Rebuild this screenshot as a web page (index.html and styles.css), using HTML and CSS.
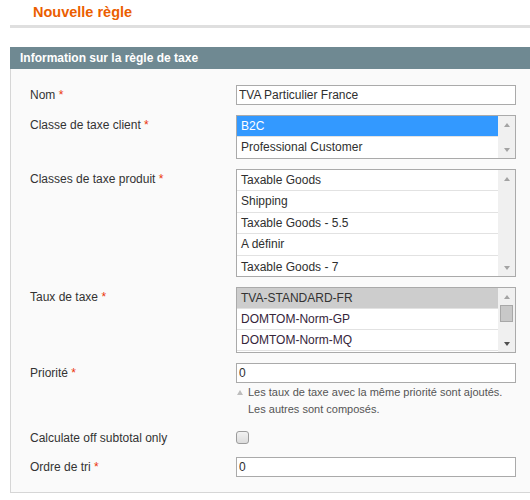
FILE: index.html
```html
<!DOCTYPE html>
<html lang="fr">
<head>
<meta charset="utf-8">
<title>Nouvelle règle</title>
<link rel="stylesheet" href="styles.css">
</head>
<body>
<div class="page">
  <div class="content-header">
    <h3 class="title">Nouvelle règle</h3>
  </div>
  <div class="entry">
    <div class="entry-head"><h4>Information sur la règle de taxe</h4></div>
    <div class="fieldset">
      <div class="row">
        <label class="lbl">Nom <span class="req">*</span></label>
        <div class="field"><input class="text" type="text" value="TVA Particulier France"></div>
      </div>
      <div class="row">
        <label class="lbl">Classe de taxe client <span class="req">*</span></label>
        <div class="field">
          <div class="msel h-client">
            <div class="opts">
              <div class="opt sel">B2C</div>
              <div class="opt last">Professional Customer</div>
            </div>
            <div class="sb">
              <div class="sb-btn"><span class="arrow-up"></span></div>
              <div class="sb-track"></div>
              <div class="sb-btn"><span class="arrow-down"></span></div>
            </div>
          </div>
        </div>
      </div>
      <div class="row">
        <label class="lbl">Classes de taxe produit <span class="req">*</span></label>
        <div class="field">
          <div class="msel h-produit">
            <div class="opts">
              <div class="opt">Taxable Goods</div>
              <div class="opt">Shipping</div>
              <div class="opt">Taxable Goods - 5.5</div>
              <div class="opt">A définir</div>
              <div class="opt last">Taxable Goods - 7</div>
            </div>
            <div class="sb">
              <div class="sb-btn"><span class="arrow-up"></span></div>
              <div class="sb-track"></div>
              <div class="sb-btn"><span class="arrow-down"></span></div>
            </div>
          </div>
        </div>
      </div>
      <div class="row">
        <label class="lbl">Taux de taxe <span class="req">*</span></label>
        <div class="field">
          <div class="msel h-taux">
            <div class="opts">
              <div class="opt sel-gray">TVA-STANDARD-FR</div>
              <div class="opt dark">DOMTOM-Norm-GP</div>
              <div class="opt dark">DOMTOM-Norm-MQ</div>
            </div>
            <div class="sb">
              <div class="sb-btn"><span class="arrow-up"></span></div>
              <div class="sb-track"><div class="thumb"></div></div>
              <div class="sb-btn"><span class="arrow-down active"></span></div>
            </div>
          </div>
        </div>
      </div>
      <div class="row">
        <label class="lbl">Priorité <span class="req">*</span></label>
        <div class="field">
          <input class="text" type="text" value="0">
          <div class="note">
            <span class="note-icon"><span class="note-tri"></span></span>
            <span class="note-text">Les taux de taxe avec la même priorité sont ajoutés. Les autres sont composés.</span>
          </div>
        </div>
      </div>
      <div class="row row-check">
        <label class="lbl">Calculate off subtotal only</label>
        <div class="field"><input class="check" type="checkbox"></div>
      </div>
      <div class="row">
        <label class="lbl">Ordre de tri <span class="req">*</span></label>
        <div class="field"><input class="text" type="text" value="0"></div>
      </div>
    </div>
  </div>
</div>
</body>
</html>
```
FILE: styles.css
```css
html, body {
  margin: 0;
  padding: 0;
}
body {
  overflow: hidden;
  background: #fff;
  font-family: "Liberation Sans", Arial, sans-serif;
  font-size: 12px;
  color: #2f2f2f;
}
.page {
  margin-left: 10px;
  margin-right: -20px;
}
.content-header {
  padding: 3px 0 4px 23px;
  border-bottom: 3px solid #dfdfdf;
  margin-bottom: 19px;
}
.title {
  margin: 0;
  font-size: 14.5px;
  line-height: 18px;
  font-weight: bold;
  color: #eb5e00;
}
.entry-head {
  height: 22px;
  background: #6f8992;
  padding-left: 10px;
}
.entry-head h4 {
  margin: 0;
  font-size: 12px;
  line-height: 22px;
  font-weight: bold;
  color: #fff;
}
.fieldset {
  background: #fafafa;
  border: 1px solid #d6d6d6;
  border-top: 0;
  padding: 16px 0 15px 19px;
  display: flex;
  flex-direction: column;
  gap: 10px;
}
.row {
  display: grid;
  grid-template-columns: 206px 280px;
}
.lbl {
  font-size: 12px;
  line-height: 18px;
  padding-top: 1px;
  color: #333;
}
.req {
  color: #eb340a;
}
.text {
  display: block;
  box-sizing: border-box;
  width: 280px;
  height: 20px;
  margin: 0;
  border: 1px solid #aaa;
  padding: 0 2px;
  font-family: "Liberation Sans", Arial, sans-serif;
  font-size: 12px;
  line-height: 18px;
  color: #2f2f2f;
  background: #fff;
  outline: none;
}
.msel {
  box-sizing: border-box;
  width: 280px;
  border: 1px solid #aaa;
  background: #fff;
  display: flex;
  overflow: hidden;
}
.h-client { height: 44px; }
.h-produit { height: 108px; }
.h-taux { height: 66px; }
.opts {
  flex: 1;
  min-width: 0;
}
.opt {
  height: 20px;
  line-height: 20px;
  padding-left: 4px;
  border-bottom: 1px solid #e2e2e2;
  white-space: nowrap;
  font-size: 12px;
  color: #2f2f2f;
}
.h-produit .opt {
  height: 20.4px;
  line-height: 20.4px;
}
.h-produit .opt.last {
  height: 21px;
  line-height: 22px;
}
.opt.last {
  border-bottom: 0;
}
.opt.sel {
  background: #3399ff;
  color: #fff;
}
.opt.sel-gray {
  background: #cdcdcd;
  color: #333;
}
.opt.dark {
  color: #35253a;
}
.sb {
  width: 17px;
  flex: none;
  background: #f0f0f0;
  display: flex;
  flex-direction: column;
}
.sb-btn {
  height: 17px;
  flex: none;
  display: flex;
  align-items: center;
  justify-content: center;
}
.sb-track {
  flex: 1;
  padding: 0 2px;
}
.thumb {
  box-sizing: border-box;
  height: 17px;
  background: #c8c8c8;
  border: 1px solid #a8a8a8;
}
.arrow-up, .arrow-down {
  width: 0;
  height: 0;
  border-left: 3.5px solid transparent;
  border-right: 3.5px solid transparent;
}
.arrow-up {
  border-bottom: 4px solid #a3a3a3;
}
.arrow-down {
  border-top: 4px solid #a3a3a3;
}
.arrow-down.active {
  border-top-color: #505050;
}
.note {
  display: flex;
  margin-top: 1px;
  font-size: 11px;
  line-height: 17px;
  color: #555;
}
.note-icon {
  flex: 0 0 12px;
  height: 17px;
  display: flex;
  align-items: center;
}
.note-tri {
  margin-left: 1px;
  width: 0;
  height: 0;
  border-left: 3px solid transparent;
  border-right: 3px solid transparent;
  border-bottom: 5px solid #bdbdbd;
}
.note-text {
  flex: 1;
}
.row-check {
  height: 19px;
}
.check {
  -webkit-appearance: none;
  appearance: none;
  box-sizing: border-box;
  width: 13px;
  height: 13px;
  margin: 3px 0 0 0;
  border: 1px solid #9c9c9c;
  border-radius: 3px;
  background: linear-gradient(#f2f2f2, #dcdcdc);
  display: block;
}
```
